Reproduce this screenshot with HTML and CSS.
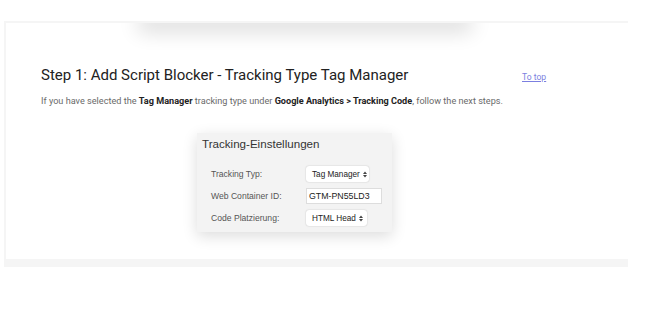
FILE: index.html
```html
<!DOCTYPE html>
<html>
<head>
<meta charset="utf-8">
<link rel="stylesheet" href="styles.css">
</head>
<body>
<section class="frame">
  <div class="top-shadow"></div>
  <div class="head-row">
    <h2 class="title">Step 1: Add Script Blocker - Tracking Type Tag Manager</h2>
    <a class="totop" href="#">To top</a>
  </div>
  <p class="intro">If you have selected the <b>Tag Manager</b> tracking type under <b>Google Analytics &gt; Tracking Code</b>, follow the next steps.</p>
  <div class="shot">
    <div class="shot-title">Tracking-Einstellungen</div>
    <div class="rows">
      <div class="row">
        <span class="lbl">Tracking Typ:</span>
        <span class="sel sel1">Tag Manager<svg class="arr" viewBox="0 0 6 9" width="4" height="7"><path d="M3 0L6 3.6H0Z M3 9L6 5.4H0Z" fill="#444"/></svg></span>
      </div>
      <div class="row">
        <span class="lbl">Web Container ID:</span>
        <span class="inp">GTM-PN55LD3</span>
      </div>
      <div class="row">
        <span class="lbl">Code Platzierung:</span>
        <span class="sel sel2">HTML Head<svg class="arr" viewBox="0 0 6 9" width="4" height="7"><path d="M3 0L6 3.6H0Z M3 9L6 5.4H0Z" fill="#444"/></svg></span>
      </div>
    </div>
  </div>
</section>
</body>
</html>
```
FILE: styles.css
```css
html, body { margin: 0; padding: 0; background: #fff; }
body { font-family: Roboto, "Liberation Sans", sans-serif; padding-top: 21px; }

.frame {
  margin-left: 4px;
  height: 236px;
  width: 587px;
  border-left: 2px solid #f5f5f5;
  border-top: 2px solid #f5f5f5;
  border-bottom: 8px solid #f5f5f5;
  padding: 0 0 0 35px;
  overflow: hidden;
}

.top-shadow {
  height: 0;
  margin-left: 106px;
  width: 316px;
  box-shadow: 0 0 20px 9px rgba(0,0,0,0.14);
}

.head-row {
  display: grid;
  grid-template-columns: 481px auto;
  align-items: baseline;
  padding-top: 42px;
}
.title {
  margin: 0;
  font-size: 15px;
  font-weight: 400;
  color: #222;
  line-height: 20px;
}
.totop {
  font-size: 8.6px;
  color: #7b7fe0;
  text-decoration: underline;
}

.intro {
  margin: 10px 0 0;
  font-size: 9.15px;
  line-height: 12px;
  color: #6a6a6a;
}
.intro b { color: #222; font-weight: 700; }

.shot {
  margin: 26px 0 0 156px;
  width: 195px;
  height: 99px;
  box-sizing: border-box;
  background: #f3f3f3;
  box-shadow: 0 4px 14px rgba(0,0,0,0.14);
  padding: 3px 0 0 5px;
  font-family: "Liberation Sans", Arial, sans-serif;
}
.shot-title {
  font-size: 11.6px;
  color: #333;
  line-height: 15px;
}
.rows {
  display: flex;
  flex-direction: column;
  gap: 6px;
  margin-top: 15px;
  padding-left: 9px;
}
.row {
  display: grid;
  grid-template-columns: 95px auto;
  align-items: center;
  height: 16px;
}
.lbl { font-size: 8.6px; color: #555; }
.sel, .inp {
  height: 16px;
  box-sizing: border-box;
  background: #fff;
  color: #222;
  display: flex;
  align-items: center;
  justify-self: start;
  white-space: nowrap;
}
.sel {
  font-size: 8.2px;
  border-radius: 3px;
  box-shadow: 0 0 1.5px rgba(0,0,0,0.25);
  padding: 0 3px 0 6px;
  gap: 3px;
}
.sel1 { width: 63px; }
.sel2 { width: 61px; }
.inp {
  font-size: 8.8px;
  width: 76px;
  border: 1px solid #ddd;
  padding-left: 2px;
}
.arr { flex: none; }
```
